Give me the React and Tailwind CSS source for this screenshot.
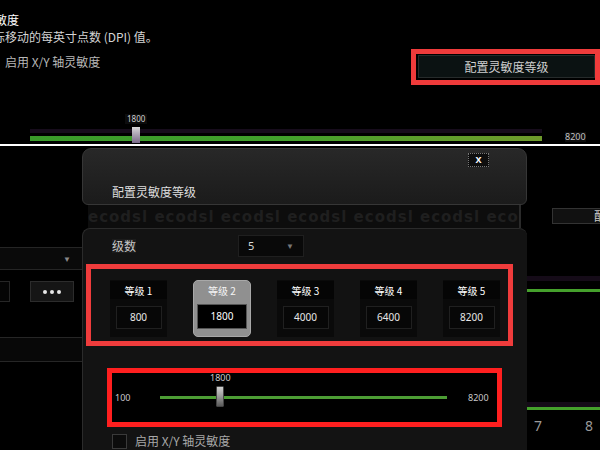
const cjk = "font-['Noto_Sans_CJK_SC','Noto_Sans',sans-serif]";
const num = "font-['Noto_Sans','Liberation_Sans',sans-serif]";

const levels = [
  { label: "等级 1", value: 800 },
  { label: "等级 2", value: 1800, active: true },
  { label: "等级 3", value: 4000 },
  { label: "等级 4", value: 6400 },
  { label: "等级 5", value: 8200 },
];

function Thumb() {
  return (
    <div className="w-[8px] h-[21px] rounded-[1px] bg-gradient-to-b from-[#d0d0d0] via-[#9a9a9a] to-[#5a5a5a] border border-[#444]" />
  );
}

function TopSection() {
  return (
    <div className={`h-[144px] overflow-hidden flex flex-col ${cjk}`}>
      <div className="mt-[12px] ml-[-17px] text-[12px] leading-[15px] text-white">灵敏度</div>
      <div className="mt-[2px] ml-[-19px] text-[12px] leading-[15px] text-[#d4d4d4] whitespace-nowrap">
        鼠标移动的每英寸点数 (DPI) 值。
      </div>
      <div className="mt-[5px] flex items-start justify-between">
        <div className="mt-[5px] ml-[5px] text-[12px] leading-[15px] text-[#b8b8b8]">
          启用 X/Y 轴灵敏度
        </div>
        <div className="w-[189px] h-[36px] border-[5px] border-[#ef3b3b] flex">
          <div className="ml-[2px] mt-[1px] w-[178px] h-[23px] bg-[#0b1212] border border-[#262b2b] flex items-center justify-center text-[12px] text-[#cfcfcf]">
            配置灵敏度等级
          </div>
        </div>
      </div>
      <div className="mt-[28px] flex items-end">
        <div className="ml-[30px] w-[512px] relative h-[30px] flex flex-col justify-end">
          <div className="h-[4px] bg-[#170c1c] mb-[3px]" />
          <div className="h-[5px] bg-gradient-to-r from-[#3a9a2a] via-[#42a02c] to-[#6f9a2c] mb-[2px]" />
          <div className="absolute left-[95px] top-[1px] flex flex-col items-center">
            <div className={`${num} text-[8px] leading-[10px] text-[#cfcfcf] bg-[#0c0c0c] px-[2px]`}>1800</div>
            <div className="mt-[3px] w-[8px] h-[16px] bg-gradient-to-b from-[#d8d8d8] to-[#7a6a8a]" />
          </div>
        </div>
        <div className={`${num} ml-[23px] mb-[1px] text-[9px] leading-[10px] text-[#c0c0c0] bg-[#0d0d0d]`}>8200</div>
      </div>
    </div>
  );
}

function LeftBackground() {
  return (
    <div className="w-[82px] flex flex-col">
      <div className="mt-[101px] h-[23px] border-y border-[#252525] bg-[#0a0a0a] flex items-center justify-end pr-[11px]">
        <span className="text-[8px] text-[#888]">▼</span>
      </div>
      <div className="mt-[11px] flex items-center">
        <div className="w-[10px] h-[21px] border border-l-0 border-[#262626] bg-[#050505]" />
        <div className="ml-[20px] w-[44px] h-[21px] bg-[#151515] border border-[#2c2c2c] flex items-center justify-center gap-[3px]">
          <span className="w-[4px] h-[4px] rounded-full bg-[#e6e6e6]" />
          <span className="w-[4px] h-[4px] rounded-full bg-[#e6e6e6]" />
          <span className="w-[4px] h-[4px] rounded-full bg-[#e6e6e6]" />
        </div>
      </div>
      <div className="mt-[35px] h-[25px] border-y border-[#262626] bg-[#080808]" />
    </div>
  );
}

function RightBackground() {
  return (
    <div className="w-[73px] flex flex-col">
      <div className="mt-[62px] ml-[25px] h-[16px] bg-[#111] border border-r-0 border-[#333] flex items-center justify-end overflow-hidden">
        <span className={`${cjk} text-[12px] text-[#ccc] mr-[-6px]`}>配</span>
      </div>
      <div className="mt-[52px] h-[5px] bg-[#150b18]" />
      <div className="mt-[8px] h-[3px] bg-[#45a02c]" />
      <div className="mt-[110px] h-[5px] bg-[#150b18]" />
      <div className="h-[3px] bg-[#45a02c]" />
      <div className={`${num} mt-[8px] flex justify-between px-[7px] text-[14px] leading-[16px] text-[#9a9a9a]`}>
        <span>7</span>
        <span>8</span>
      </div>
    </div>
  );
}

function LevelCard({ label, value, active }) {
  if (active) {
    return (
      <div className="w-[58px] h-[57px] rounded-[5px] bg-[#909090] border border-[#a8a8a8] flex flex-col items-center">
        <div className={`${cjk} mt-[2px] text-[10px] leading-[16px] text-[#f4f4f4]`}>{label}</div>
        <div className={`${num} mt-[5px] w-[50px] h-[25px] bg-black border border-[#555] flex items-center justify-center text-[10px] text-white`}>
          {value}
        </div>
      </div>
    );
  }
  return (
    <div className="w-[57px] h-[57px] bg-[#0a0a0a] flex flex-col items-center">
      <div className={`${cjk} w-full h-[18px] mt-[1px] bg-[#050505] flex items-center justify-center text-[10px] text-white`}>
        {label}
      </div>
      <div className={`${num} mt-[7px] w-[46px] h-[23px] bg-[#070707] border border-[#202020] flex items-center justify-center text-[10px] text-[#e8e8e8]`}>
        {value}
      </div>
    </div>
  );
}

function Dialog() {
  return (
    <div className="w-[445px] flex flex-col mt-[2px]">
      <div className="h-[57px] rounded-t-[9px] rounded-b-[6px] bg-gradient-to-b from-[#282828] to-[#1b1b1b] border border-[#363636] flex flex-col">
        <div className="flex justify-end mr-[37px] mt-[4px]">
          <div className={`${num} w-[21px] h-[14px] bg-[#0e0e0e] border border-dotted border-[#777] flex items-center justify-center text-[9px] font-bold text-white`}>
            X
          </div>
        </div>
        <div className={`${cjk} ml-[29px] mt-[18px] text-[12px] leading-[14px] text-[#dedede]`}>配置灵敏度等级</div>
      </div>
      <div className="h-[23px] mx-[6px] bg-[#0d0d0d] border-r-2 border-[#2a2a2a] overflow-hidden flex items-center">
        <span className="font-['DejaVu_Sans',sans-serif] font-bold text-[15px] leading-[16px] tracking-[1px] text-[#1f1f1f] whitespace-nowrap">
          ecodsl ecodsl ecodsl ecodsl ecodsl ecodsl ecodsl ecodsl
        </span>
      </div>
      <div className="flex-1 rounded-t-[8px] bg-[#131313] border-l border-t border-[#2b2b2b] flex flex-col">
        <div className="mt-[6px] flex items-center">
          <div className={`${cjk} ml-[29px] text-[12px] leading-[14px] text-[#c8c8c8] bg-[#1c1c1c]`}>级数</div>
          <div className="ml-[102px] w-[66px] h-[22px] bg-[#090909] border border-[#1f1f1f] flex items-center justify-between px-[9px]">
            <span className={`${num} text-[11px] text-[#d8d8d8]`}>5</span>
            <span className="text-[8px] text-[#777]">▼</span>
          </div>
        </div>
        <div className="mt-[7px] ml-[3px] w-[427px] h-[82px] border-[5px] border-[#f03c3c] bg-[#121212] flex items-start pt-[11px] pl-[19px] gap-[26px]">
          {levels.map((level, index) => (
            <LevelCard key={index} {...level} />
          ))}
        </div>
        <div className="mt-[22px] ml-[24px] w-[395px] h-[59px] border-[5px] border-[#ff1f1f] bg-black flex items-center">
          <div className={`${num} w-[48px] pl-[3px] text-[9px] text-[#c8c8c8]`}>100</div>
          <div className="relative w-[287px] h-[3px] bg-[#4c9d34]">
            <div className="absolute left-[56px] top-[-10px]">
              <Thumb />
            </div>
            <div className={`${num} absolute left-[50px] top-[-23px] text-[9px] leading-[10px] text-[#c8c8c8]`}>1800</div>
          </div>
          <div className={`${num} ml-[21px] text-[9px] text-[#c8c8c8]`}>8200</div>
        </div>
        <div className="mt-[6px] ml-[29px] flex items-center gap-[8px]">
          <div className="w-[15px] h-[15px] border border-[#3a3a3a] bg-[#0c0c0c]" />
          <span className={`${cjk} text-[12px] leading-[16px] text-[#a8a8a8]`}>启用 X/Y 轴灵敏度</span>
        </div>
      </div>
    </div>
  );
}

export default function App() {
  return (
    <div className="w-[600px] h-[450px] overflow-hidden bg-black">
      <TopSection />
      <div className="h-[2px] bg-white" />
      <div className="h-[304px] flex overflow-hidden">
        <LeftBackground />
        <Dialog />
        <RightBackground />
      </div>
    </div>
  );
}
